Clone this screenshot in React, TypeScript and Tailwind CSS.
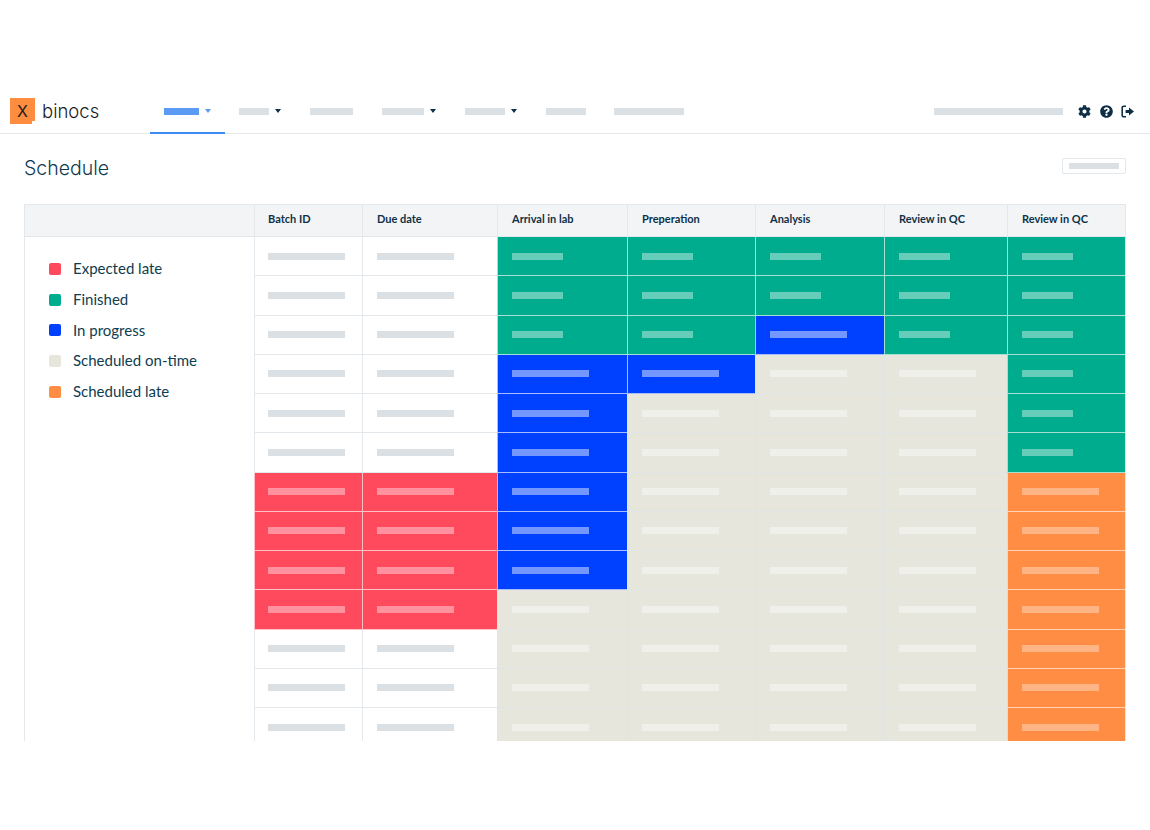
import React from "react";
import { FaCog, FaQuestionCircle } from "react-icons/fa";

type C = "w" | "g" | "b" | "e" | "r" | "o";
const rows: C[][] = [
  ["w","w","g","g","g","g","g"],
  ["w","w","g","g","g","g","g"],
  ["w","w","g","g","b","g","g"],
  ["w","w","b","b","e","e","g"],
  ["w","w","b","e","e","e","g"],
  ["w","w","b","e","e","e","g"],
  ["r","r","b","e","e","e","o"],
  ["r","r","b","e","e","e","o"],
  ["r","r","b","e","e","e","o"],
  ["r","r","e","e","e","e","o"],
  ["w","w","e","e","e","e","o"],
  ["w","w","e","e","e","e","o"],
  ["w","w","e","e","e","e","o"],
];
const cellClass: Record<C, string> = {
  w: "bg-white border-[#e3e8ec]",
  g: "bg-[#00ac8e] border-[#a6e0d5]",
  b: "bg-[#0041ff] border-[#a6bdff]",
  e: "bg-[#e6e6dd] border-[#dfe4e6]",
  r: "bg-[#ff4a5e] border-[#ffc0c6]",
  o: "bg-[#ff8d44] border-[#ffd2b5]",
};
const barClass: Record<C, string> = {
  w: "bg-[#dae0e4] w-[77px]",
  g: "bg-white/40 w-[51px]",
  b: "bg-white/45 w-[77px]",
  e: "bg-white/40 w-[77px]",
  r: "bg-white/40 w-[77px]",
  o: "bg-white/35 w-[77px]",
};
const headers = ["Batch ID", "Due date", "Arrival in lab", "Preperation", "Analysis", "Review in QC", "Review in QC"];
const legend: [string, string][] = [
  ["bg-[#ff4a5e]", "Expected late"],
  ["bg-[#00ac8e]", "Finished"],
  ["bg-[#0041ff]", "In progress"],
  ["bg-[#e6e6dd]", "Scheduled on-time"],
  ["bg-[#ff8d44]", "Scheduled late"],
];
const Caret = ({ blue }: { blue?: boolean }) => (
  <svg width="6" height="4" viewBox="0 0 6 4" className="ml-[6px]">
    <path d="M0 0h6L3 4z" fill={blue ? "#5b9bf3" : "#0e2f45"} />
  </svg>
);
const NavBar = ({ w, className = "" }: { w: string; className?: string }) => (
  <div className={`h-[7px] bg-[#dae0e4] ${w} ${className}`} />
);
const Logout = () => (
  <svg width="13" height="13" viewBox="0 0 13 13" className="ml-[8px]">
    <path d="M5 1.2H2.8A1.6 1.6 0 0 0 1.2 2.8v7.4a1.6 1.6 0 0 0 1.6 1.6H5" fill="none" stroke="#0e2f45" strokeWidth="1.6" />
    <path d="M4.6 5.1h3.4V2.6l5 3.9-5 3.9V7.9H4.6z" fill="#0e2f45" />
  </svg>
);

export default function App() {
  return (
    <div className="w-[1150px] h-[830px] bg-white overflow-hidden font-['Lato',sans-serif] text-[#0e3148]">
      <div className="h-[98px]" />
      <header className="relative h-[36px] border-b border-[#e3e8ec] flex items-center pb-[9px]">
        <div className="relative ml-[10px] w-[25px] h-[26px] bg-[#ff8d3f] flex items-center justify-center text-[#1c1c1c] text-[16px] font-['Inter',sans-serif] font-normal leading-none">
          X
          <span className="absolute right-0 bottom-0 w-[3px] h-[3px] bg-white" />
        </div>
        <span className="ml-[7px] w-[60px] font-['Inter',sans-serif] font-light text-[18.5px] leading-none text-[#1c1c1c]">binocs</span>
        <div className="flex items-center ml-[62px]">
          <div className="h-[7px] w-[35px] bg-[#5b9bf3]" />
          <Caret blue />
        </div>
        <div className="flex items-center ml-[28px]"><NavBar w="w-[30px]" /><Caret /></div>
        <NavBar w="w-[43px]" className="ml-[29px]" />
        <div className="flex items-center ml-[29px]"><NavBar w="w-[42px]" /><Caret /></div>
        <div className="flex items-center ml-[29px]"><NavBar w="w-[40px]" /><Caret /></div>
        <NavBar w="w-[40px]" className="ml-[29px]" />
        <NavBar w="w-[70px]" className="ml-[28px]" />
        <NavBar w="w-[129px]" className="ml-[250px]" />
        <div className="ml-[15px] flex items-center text-[#0e2f45]">
          <FaCog size={13} />
          <FaQuestionCircle size={13} className="ml-[9px]" />
          <Logout />
        </div>
        <div className="absolute left-[150px] bottom-[-1px] w-[75px] h-[2px] bg-[#3f8cf3]" />
      </header>
      <div className="ml-[24px] w-[1102px] h-[70px] flex items-center justify-between">
        <h1 className="font-['Inter',sans-serif] font-light text-[19.5px] leading-none text-[#0e3a52]">Schedule</h1>
        <div className="mt-[-6px] w-[64px] h-[16px] border border-[#e3e8ec] rounded-[2px] flex items-center justify-center">
          <div className="w-[50px] h-[6px] bg-[#dae0e4]" />
        </div>
      </div>
      <div className="ml-[24px] w-[1102px] h-[537px] overflow-hidden border-l border-r border-t border-[#e3e8ec] flex">
        <div className="w-[229px] shrink-0">
          <div className="h-[32px] bg-[#f2f4f6] border-b border-[#e3e8ec]" />
          <ul className="pt-[16.5px] pl-[24px] flex flex-col">
            {legend.map(([c, t]) => (
              <li key={t} className="h-[30.7px] flex items-center">
                <span className={`w-[12px] h-[12px] rounded-[2px] ${c}`} />
                <span className="ml-[12px] text-[15px] leading-none text-[#0e3d50]">{t}</span>
              </li>
            ))}
          </ul>
        </div>
        <div className="grid grid-cols-[108px_135px_130px_128px_129px_123px_1fr] grid-rows-[32px_repeat(13,39.25px)] grow content-start">
          {headers.map((h, i) => (
            <div key={i} className={`bg-[#f2f4f6] border-l border-b border-[#e3e8ec] flex items-center pb-[5px] text-[11px] font-bold leading-none text-[#0e3148] ${i === 0 ? "pl-[13px]" : "pl-[14px]"}`}>
              {h}
            </div>
          ))}
          {rows.flatMap((r, y) =>
            r.map((c, x) => (
              <div key={`${y}-${x}`} className={`border-l border-b flex items-center ${cellClass[c]} ${x === 0 ? "pl-[13px]" : "pl-[14px]"}`}>
                <div className={`h-[7px] ${barClass[c]}`} />
              </div>
            ))
          )}
        </div>
      </div>
    </div>
  );
}
